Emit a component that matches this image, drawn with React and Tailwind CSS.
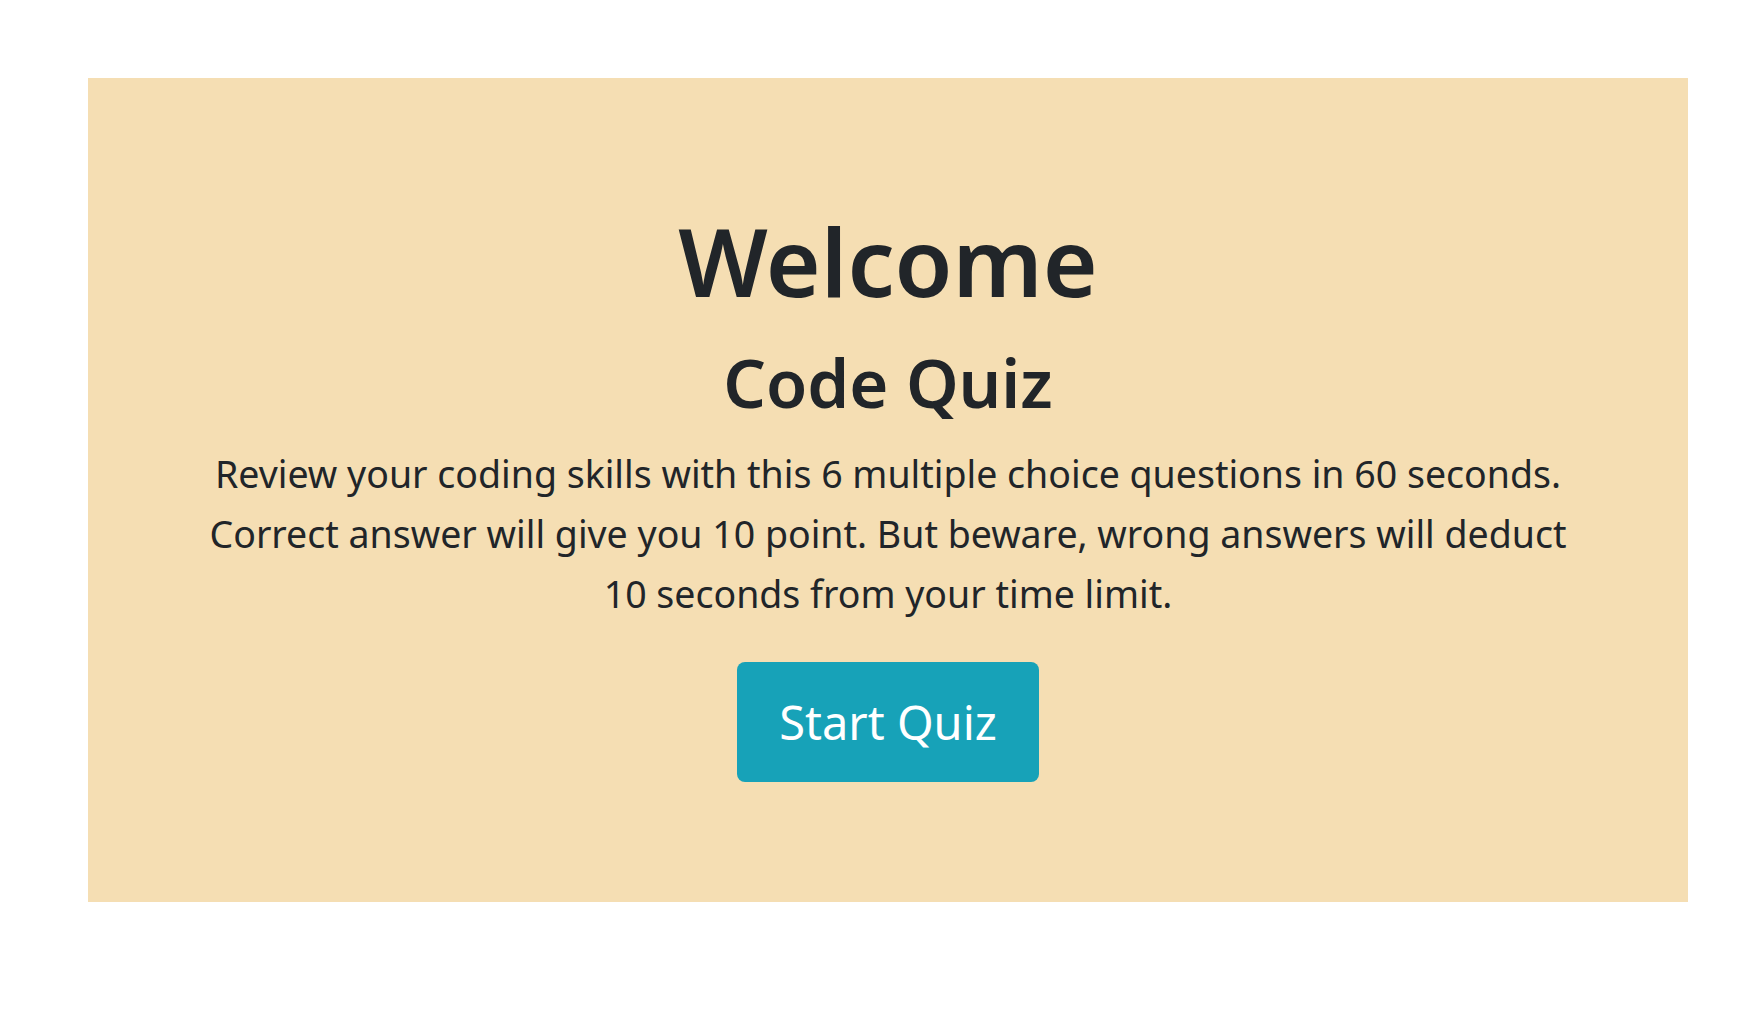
import React from "react";

const font = { fontFamily: '"Noto Sans", "Open Sans", sans-serif' };

export default function App() {
  return (
    <div className="min-h-screen bg-white pt-[78px] px-[88px]" style={font}>
      <div className="w-[1600px] h-[824px] bg-[#f5deb3] flex flex-col items-center pt-[127px] text-[#212529] text-center">
        <h1 className="text-[94px] leading-[1.2] font-semibold">Welcome</h1>
        <h2 className="text-[67px] leading-[1.2] font-semibold mt-[24px]">Code Quiz</h2>
        <p className="text-[37.5px] leading-[60px] w-[1370px] mt-[22px]">
          Review your coding skills with this 6 multiple choice questions in 60 seconds. Correct answer will give
          you 10 point. But beware, wrong answers will deduct 10 seconds from your time limit.
        </p>
        <button className="mt-[38px] w-[302px] h-[120px] rounded-[8px] bg-[#17a2b8] text-white text-[47px]">
          Start Quiz
        </button>
      </div>
    </div>
  );
}
